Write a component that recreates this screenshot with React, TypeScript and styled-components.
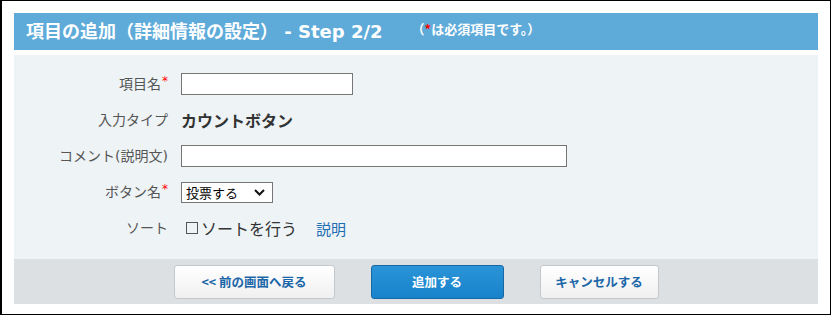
import React from 'react'
import styled, { createGlobalStyle } from 'styled-components'

const GlobalStyle = createGlobalStyle`
  body {
    margin: 0;
    background: #ffffff;
    font-family: "DejaVu Sans", "Noto Sans CJK JP", sans-serif;
  }
`

const Frame = styled.div`
  width: 831px;
  height: 315px;
  box-sizing: border-box;
  border-style: solid;
  border-color: #000;
  border-width: 1px 1px 1px 2px;
  padding: 12px 12px 10px 12px;
  background: #fff;
`

const Header = styled.div`
  height: 37px;
  background: #5eaad9;
  display: flex;
  align-items: center;
  padding-left: 12px;
  margin-bottom: 5px;
`

const Title = styled.h1`
  margin: 0;
  font-size: 18px;
  font-weight: bold;
  color: #fff;
  line-height: 1;
`

const Note = styled.span`
  margin-left: 29px;
  margin-bottom: 7px;
  font-family: "Noto Sans CJK JP", sans-serif;
  font-size: 13px;
  font-weight: bold;
  color: #fff;
  line-height: 1;
`

const Mark = styled.span`
  color: #ff0000;
`

const Body = styled.div`
  height: 204px;
  box-sizing: border-box;
  background: #eef3f6;
  padding-top: 11px;
`

const Row = styled.div`
  display: flex;
  align-items: center;
  height: 36px;
`

const Label = styled.div`
  width: 154px;
  margin-right: 13px;
  text-align: right;
  font-size: 14px;
  color: #555;
  line-height: 1;
`

const Required = styled.sup`
  color: #ff0000;
  font-size: 12px;
  margin-left: 1px;
  vertical-align: 4px;
  line-height: 0;
`

const TextInput = styled.input<{ $width: number }>`
  width: ${({ $width }) => $width}px;
  height: 22px;
  box-sizing: border-box;
  border: 1px solid #767676;
  background: #fff;
  margin: 0;
  padding: 0 3px;
  font-size: 13px;
`

const Value = styled.span`
  font-size: 16px;
  font-weight: bold;
  color: #333;
`

const SelectWrap = styled.div`
  position: relative;
  width: 92px;
  height: 21px;
`

const Select = styled.select`
  appearance: none;
  width: 100%;
  height: 100%;
  box-sizing: border-box;
  border: 1px solid #767676;
  border-radius: 0;
  background: #fff;
  margin: 0;
  padding: 0 0 0 4px;
  font-family: "Noto Sans CJK JP", sans-serif;
  font-size: 13px;
  color: #000;
`

const Chevron = styled.svg`
  position: absolute;
  right: 8px;
  top: 7px;
  pointer-events: none;
`

const CheckLabel = styled.label`
  display: flex;
  align-items: center;
  margin-left: 5px;
  font-size: 16px;
  color: #333;
`

const Box = styled.span`
  width: 12px;
  height: 12px;
  box-sizing: border-box;
  border: 1px solid #555;
  margin-right: 3px;
`

const Help = styled.a`
  margin-left: 19px;
  font-size: 15px;
  color: #1e6eb4;
  text-decoration: none;
`

const Footer = styled.div`
  height: 45px;
  background: #dce0e3;
  display: flex;
  justify-content: center;
  align-items: center;
  gap: 36px;
`

const Button = styled.button<{ $primary?: boolean; $width: number }>`
  width: ${({ $width }) => $width}px;
  height: 34px;
  border-radius: 3px;
  font-family: "Noto Sans CJK JP", sans-serif;
  font-size: 12.5px;
  font-weight: bold;
  cursor: pointer;
  padding: 0;
  border: 1px solid ${({ $primary }) => ($primary ? '#1769a6' : '#c2c8cc')};
  color: ${({ $primary }) => ($primary ? '#fff' : '#1a66a8')};
  background: ${({ $primary }) =>
    $primary
      ? 'linear-gradient(#2b94d8, #1882cb)'
      : 'linear-gradient(#ffffff, #f0f0f0)'};
`

const App: React.FC = () => (
  <>
    <GlobalStyle />
    <Frame>
      <Header>
        <Title>項目の追加（詳細情報の設定） - Step 2/2</Title>
        <Note>
          （<Mark>*</Mark>は必須項目です。）
        </Note>
      </Header>
      <Body>
        <Row>
          <Label>
            項目名<Required>*</Required>
          </Label>
          <TextInput $width={172} />
        </Row>
        <Row>
          <Label>入力タイプ</Label>
          <Value>カウントボタン</Value>
        </Row>
        <Row>
          <Label>コメント(説明文)</Label>
          <TextInput $width={386} />
        </Row>
        <Row>
          <Label>
            ボタン名<Required>*</Required>
          </Label>
          <SelectWrap>
            <Select defaultValue="vote">
              <option value="vote">投票する</option>
            </Select>
            <Chevron width="11" height="7" viewBox="0 0 11 7">
              <path d="M1 1l4.5 4.5L10 1" fill="none" stroke="#111" strokeWidth="2" />
            </Chevron>
          </SelectWrap>
        </Row>
        <Row>
          <Label>ソート</Label>
          <CheckLabel>
            <Box />
            ソートを行う
          </CheckLabel>
          <Help href="#">説明</Help>
        </Row>
      </Body>
      <Footer>
        <Button $width={161}>&lt;&lt; 前の画面へ戻る</Button>
        <Button $width={133} $primary>
          追加する
        </Button>
        <Button $width={119}>キャンセルする</Button>
      </Footer>
    </Frame>
  </>
)

export default App
